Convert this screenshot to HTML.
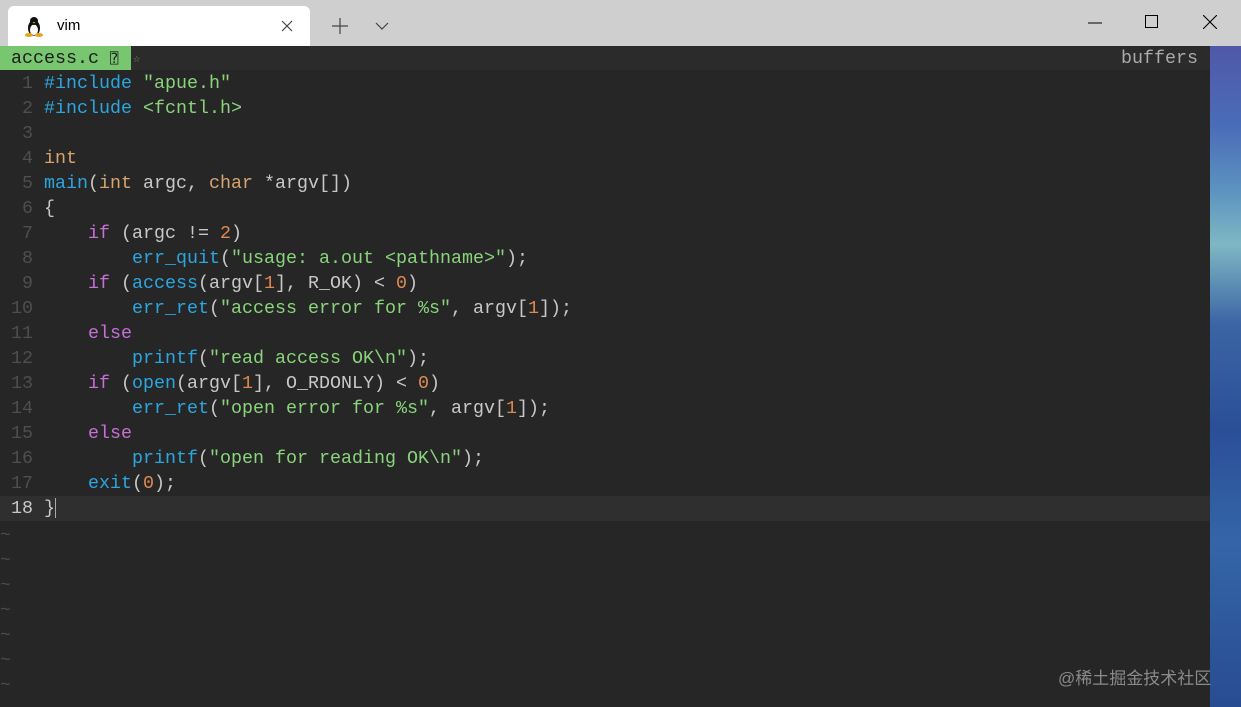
<!DOCTYPE html><html><head><meta charset="utf-8"><style>
body{margin:0;width:1241px;height:707px;overflow:hidden;background:#262626;position:relative;font-family:"Liberation Mono",monospace}
.tb{position:absolute;left:0;top:0;width:1241px;height:46px;background:#cfcfcf}
.tab{position:absolute;left:8px;top:6px;width:302px;height:40px;background:#fff;border-radius:6px 6px 0 0;font-family:"Liberation Sans",sans-serif;font-size:15px;color:#000}
.sl{position:absolute;left:0;top:46px;width:1210px;height:24px;background:#2b2b2b;font-size:18.33px;line-height:26px}
.ed{position:absolute;left:0;top:71px;width:1210px;font-size:18.33px}
.r{height:25px;line-height:25px;white-space:pre;position:relative;color:#c8c8c8}
.n{display:inline-block;width:33px;text-align:right;color:#4e4e4e;margin-right:11px}
.k{color:#2ba6e0}.s{color:#89d47b}.p{color:#c66fd6}.o{color:#e08a52}.t{color:#d7a46e}
.til{position:absolute;left:0;color:#4a4a4a;font-size:18px}
.strip{position:absolute;left:1210px;top:46px;width:31px;height:661px;background:linear-gradient(180deg,#5058a8 0%,#4a6cb8 12%,#5d93c0 22%,#7fb7c4 30%,#3b65a5 42%,#2a4f98 58%,#3565a8 75%,#284c92 100%)}
</style></head><body>
<div class="tb">
<div class="tab">
<svg style="position:absolute;left:16px;top:9px" width="20" height="22" viewBox="0 0 20 22"><ellipse cx="10" cy="13" rx="6" ry="8" fill="#111"/><ellipse cx="10" cy="15" rx="4" ry="5.5" fill="#fff"/><circle cx="10" cy="6" r="4" fill="#111"/><ellipse cx="5" cy="20" rx="4" ry="2" fill="#e8a317"/><ellipse cx="15" cy="20" rx="4" ry="2" fill="#e8a317"/><path d="M8.5 7 L10 8.5 L11.5 7Z" fill="#e8a317"/></svg>
<span style="position:absolute;left:49px;top:11px">vim</span>
<svg style="position:absolute;left:273px;top:14px" width="12" height="12"><path d="M1 1L11 11M11 1L1 11" stroke="#444" stroke-width="1.2"/></svg>
</div>
<svg style="position:absolute;left:332px;top:18px" width="16" height="16"><path d="M8 0V16M0 8H16" stroke="#444" stroke-width="1.2"/></svg>
<svg style="position:absolute;left:375px;top:22px" width="14" height="8"><path d="M1 1L7 7L13 1" stroke="#444" stroke-width="1.2" fill="none"/></svg>
<svg style="position:absolute;left:1088px;top:22px" width="14" height="2"><path d="M0 1H14" stroke="#000" stroke-width="1"/></svg>
<svg style="position:absolute;left:1145px;top:15px" width="14" height="14"><rect x="0.5" y="0.5" width="12" height="12" fill="none" stroke="#000"/></svg>
<svg style="position:absolute;left:1203px;top:15px" width="14" height="14"><path d="M0 0L14 14M14 0L0 14" stroke="#000" stroke-width="1.1"/></svg>
</div>
<div class="sl"><span style="position:absolute;left:0;top:0;width:131px;height:24px;background:#78c66f;color:#1d1d1d;padding-left:11px;box-sizing:border-box">access.c <span style="font-size:14px">⍰</span></span><span style="position:absolute;left:133px;top:0;color:#6a9a5a;font-size:12px">☆</span><span style="position:absolute;right:12px;top:0;color:#aaa">buffers</span></div>
<div class="ed">
<div class="r"><span class="n">1</span><span class="k">#include</span> <span class="s">"apue.h"</span></div>
<div class="r"><span class="n">2</span><span class="k">#include</span> <span class="s">&lt;fcntl.h&gt;</span></div>
<div class="r"><span class="n">3</span></div>
<div class="r"><span class="n">4</span><span class="t">int</span></div>
<div class="r"><span class="n">5</span><span class="k">main</span>(<span class="t">int</span> argc, <span class="t">char</span> *argv[])</div>
<div class="r"><span class="n">6</span>{</div>
<div class="r"><span class="n">7</span>    <span class="p">if</span> (argc != <span class="o">2</span>)</div>
<div class="r"><span class="n">8</span>        <span class="k">err_quit</span>(<span class="s">"usage: a.out &lt;pathname&gt;"</span>);</div>
<div class="r"><span class="n">9</span>    <span class="p">if</span> (<span class="k">access</span>(argv[<span class="o">1</span>], R_OK) &lt; <span class="o">0</span>)</div>
<div class="r"><span class="n">10</span>        <span class="k">err_ret</span>(<span class="s">"access error for %s"</span>, argv[<span class="o">1</span>]);</div>
<div class="r"><span class="n">11</span>    <span class="p">else</span></div>
<div class="r"><span class="n">12</span>        <span class="k">printf</span>(<span class="s">"read access OK\n"</span>);</div>
<div class="r"><span class="n">13</span>    <span class="p">if</span> (<span class="k">open</span>(argv[<span class="o">1</span>], O_RDONLY) &lt; <span class="o">0</span>)</div>
<div class="r"><span class="n">14</span>        <span class="k">err_ret</span>(<span class="s">"open error for %s"</span>, argv[<span class="o">1</span>]);</div>
<div class="r"><span class="n">15</span>    <span class="p">else</span></div>
<div class="r"><span class="n">16</span>        <span class="k">printf</span>(<span class="s">"open for reading OK\n"</span>);</div>
<div class="r"><span class="n">17</span>    <span class="k">exit</span>(<span class="o">0</span>);</div>
<div class="r" style="background:#2f2f2f"><span class="n" style="color:#c8c8c8">18</span>}<span style="display:inline-block;width:1px;height:20px;background:#aaa;vertical-align:middle"></span></div>
</div>
<div class="til" style="top:526px">~</div><div class="til" style="top:551px">~</div><div class="til" style="top:576px">~</div><div class="til" style="top:601px">~</div><div class="til" style="top:626px">~</div><div class="til" style="top:651px">~</div><div class="til" style="top:676px">~</div>
<div class="strip"></div>
<div style="position:absolute;left:1058px;top:664px;font-family:'Liberation Sans','Noto Sans CJK SC',sans-serif;font-size:17px;color:#8a8a8a">@稀土掘金技术社区</div>
</body></html>
